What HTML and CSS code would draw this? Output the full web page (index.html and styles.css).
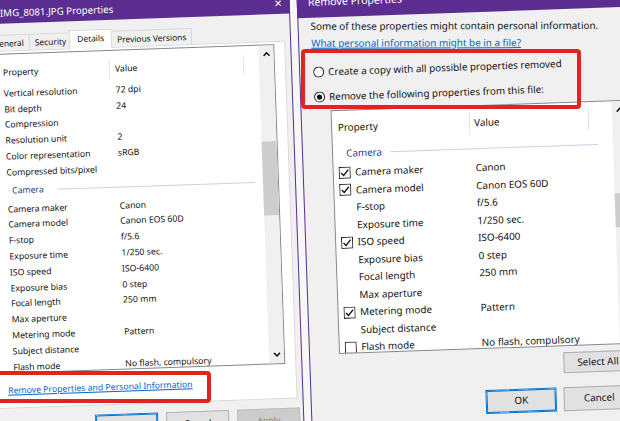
FILE: index.html
```html
<!DOCTYPE html>
<html>
<head>
<meta charset="utf-8">
<title>Remove Properties</title>
<link rel="stylesheet" href="styles.css">
</head>
<body>
<div class="stage">
  <section class="dlg dlg-left">
    <header class="titlebar tb-left">
      <span class="title">IMG_8081.JPG Properties</span>
      <span class="close">✕</span>
    </header>
    <div class="lbody">
      <nav class="tabs">
        <span class="tab">General</span>
        <span class="tab">Security</span>
        <span class="tab active">Details</span>
        <span class="tab">Previous Versions</span>
      </nav>
      <div class="tabpage">
        <div class="list">
          <div class="list-main">
            <div class="lhead">
              <span class="hcol c1">Property</span>
              <span class="hcol c2">Value</span>
              <span class="hcol c3"></span>
            </div>
            <div class="rows">
              <div class="row"><span class="k">Vertical resolution</span><span class="v">72 dpi</span></div>
              <div class="row"><span class="k">Bit depth</span><span class="v">24</span></div>
              <div class="row"><span class="k">Compression</span><span class="v"></span></div>
              <div class="row"><span class="k">Resolution unit</span><span class="v">2</span></div>
              <div class="row"><span class="k">Color representation</span><span class="v">sRGB</span></div>
              <div class="row"><span class="k">Compressed bits/pixel</span><span class="v"></span></div>
              <div class="group"><span>Camera</span><i></i></div>
              <div class="row"><span class="k">Camera maker</span><span class="v">Canon</span></div>
              <div class="row"><span class="k">Camera model</span><span class="v">Canon EOS 60D</span></div>
              <div class="row"><span class="k">F-stop</span><span class="v">f/5.6</span></div>
              <div class="row"><span class="k">Exposure time</span><span class="v">1/250 sec.</span></div>
              <div class="row"><span class="k">ISO speed</span><span class="v">ISO-6400</span></div>
              <div class="row"><span class="k">Exposure bias</span><span class="v">0 step</span></div>
              <div class="row"><span class="k">Focal length</span><span class="v">250 mm</span></div>
              <div class="row"><span class="k">Max aperture</span><span class="v"></span></div>
              <div class="row"><span class="k">Metering mode</span><span class="v">Pattern</span></div>
              <div class="row"><span class="k">Subject distance</span><span class="v"></span></div>
              <div class="row"><span class="k">Flash mode</span><span class="v">No flash, compulsory</span></div>
            </div>
          </div>
          <div class="vscroll">
            <span class="arrow"><svg width="8" height="5" viewBox="0 0 8 5"><path d="M1 4.5 L4 1.3 L7 4.5" fill="none" stroke="#111" stroke-width="1.5"/></svg></span>
            <span class="track"><span class="thumb thumb-l"></span></span>
            <span class="arrow"><svg width="8" height="5" viewBox="0 0 8 5"><path d="M1 0.5 L4 3.7 L7 0.5" fill="none" stroke="#111" stroke-width="1.5"/></svg></span>
          </div>
        </div>
        <div class="link-row"><a class="link">Remove Properties and Personal Information</a></div>
      </div>
      <div class="lbuttons">
        <span class="btn default">OK</span>
        <span class="btn">Cancel</span>
        <span class="btn disabled">Apply</span>
      </div>
    </div>
  </section>

  <section class="dlg dlg-right">
    <header class="titlebar tb-right">
      <span class="title">Remove Properties</span>
    </header>
    <div class="rbody">
      <p class="intro">Some of these properties might contain personal information.</p>
      <a class="rlink">What personal information might be in a file?</a>
      <div class="radios">
        <label class="radio"><svg width="11" height="11" viewBox="0 0 11 11"><circle cx="5.5" cy="5.5" r="5" fill="#fff" stroke="#222"/></svg><span>Create a copy with all possible properties removed</span></label>
        <label class="radio"><svg width="11" height="11" viewBox="0 0 11 11"><circle cx="5.5" cy="5.5" r="5" fill="#fff" stroke="#222"/><circle cx="5.5" cy="5.5" r="2.6" fill="#111"/></svg><span>Remove the following properties from this file:</span></label>
      </div>
      <div class="rlist">
        <div class="rlist-main">
          <div class="rhead">
            <span class="rh c1">Property</span>
            <span class="rh c2">Value</span>
            <span class="rh c3"></span>
          </div>
          <div class="rgroup"><span>Camera</span><i></i></div>
          <div class="rrow"><span class="ck"><svg width="12" height="12" viewBox="0 0 12 12"><rect x="0.5" y="0.5" width="11" height="11" fill="#fff" stroke="#222"/><path d="M2.4 6.2 L4.8 8.7 L9.6 3.1" fill="none" stroke="#111" stroke-width="1.3"/></svg></span><span class="k">Camera maker</span><span class="v">Canon</span></div>
          <div class="rrow"><span class="ck"><svg width="12" height="12" viewBox="0 0 12 12"><rect x="0.5" y="0.5" width="11" height="11" fill="#fff" stroke="#222"/><path d="M2.4 6.2 L4.8 8.7 L9.6 3.1" fill="none" stroke="#111" stroke-width="1.3"/></svg></span><span class="k">Camera model</span><span class="v">Canon EOS 60D</span></div>
          <div class="rrow"><span class="ck"></span><span class="k">F-stop</span><span class="v">f/5.6</span></div>
          <div class="rrow"><span class="ck"></span><span class="k">Exposure time</span><span class="v">1/250 sec.</span></div>
          <div class="rrow"><span class="ck"><svg width="12" height="12" viewBox="0 0 12 12"><rect x="0.5" y="0.5" width="11" height="11" fill="#fff" stroke="#222"/><path d="M2.4 6.2 L4.8 8.7 L9.6 3.1" fill="none" stroke="#111" stroke-width="1.3"/></svg></span><span class="k">ISO speed</span><span class="v">ISO-6400</span></div>
          <div class="rrow"><span class="ck"></span><span class="k">Exposure bias</span><span class="v">0 step</span></div>
          <div class="rrow"><span class="ck"></span><span class="k">Focal length</span><span class="v">250 mm</span></div>
          <div class="rrow"><span class="ck"></span><span class="k">Max aperture</span><span class="v"></span></div>
          <div class="rrow"><span class="ck"><svg width="12" height="12" viewBox="0 0 12 12"><rect x="0.5" y="0.5" width="11" height="11" fill="#fff" stroke="#222"/><path d="M2.4 6.2 L4.8 8.7 L9.6 3.1" fill="none" stroke="#111" stroke-width="1.3"/></svg></span><span class="k">Metering mode</span><span class="v">Pattern</span></div>
          <div class="rrow"><span class="ck"></span><span class="k">Subject distance</span><span class="v"></span></div>
          <div class="rrow"><span class="ck"><svg width="12" height="12" viewBox="0 0 12 12"><rect x="0.5" y="0.5" width="11" height="11" fill="#fff" stroke="#222"/></svg></span><span class="k">Flash mode</span><span class="v">No flash, compulsory</span></div>
        </div>
        <div class="vscroll rscroll">
          <span class="arrow"><svg width="8" height="5" viewBox="0 0 8 5"><path d="M1 4.5 L4 1.3 L7 4.5" fill="none" stroke="#111" stroke-width="1.5"/></svg></span>
          <span class="track"><span class="thumb thumb-r"></span></span>
          <span class="arrow"><svg width="8" height="5" viewBox="0 0 8 5"><path d="M1 0.5 L4 3.7 L7 0.5" fill="none" stroke="#111" stroke-width="1.5"/></svg></span>
        </div>
      </div>
      <div class="selrow"><span class="btn sel">Select All</span></div>
      <div class="rbuttons">
        <span class="btn default rb">OK</span>
        <span class="btn rb">Cancel</span>
      </div>
    </div>
  </section>
</div>
<div class="mark mark-left"></div>
<div class="mark mark-right"></div>
</body>
</html>
```

FILE: styles.css
```css
* { box-sizing: border-box; }

body {
  margin: 0;
  width: 620px;
  height: 421px;
  overflow: hidden;
  position: relative;
  background: #f7f7f7;
  font-family: "Noto Sans", "Open Sans", sans-serif;
  color: #111;
}

.stage {
  display: flex;
  align-items: flex-start;
  width: 720px;
  height: 520px;
  margin: -40px 0 0 -40px;
  padding: 24px 0 0 20px;
  transform: rotate(-2deg);
  transform-origin: 350px 250px;
}

.dlg {
  flex: none;
  height: 470px;
  background: #f0f0f0;
  border: 1px solid #5c2d91;
  border-top: 0;
}

.dlg-left { width: 317px; }
.dlg-right { width: 380px; margin-left: 7px; }

.titlebar {
  display: flex;
  align-items: flex-start;
  justify-content: space-between;
  background: #5c2d91;
  color: #fff;
  margin: 0 -1px;
}

.tb-left {
  height: 29px;
  padding: 12px 8px 0 27px;
  font-size: 9.7px;
  line-height: 13px;
}

.close { font-size: 10px; line-height: 13px; }

.tb-right {
  height: 33.5px;
  padding: 11.5px 0 0 11px;
  font-size: 10.6px;
  line-height: 13px;
}

/* ---------- left dialog ---------- */
.lbody { font-size: 8.7px; }

.tabs {
  display: flex;
  align-items: flex-end;
  height: 18px;
  margin-top: 9px;
  padding-left: 12px;
  font-size: 8.4px;
}

.tab {
  height: 16px;
  padding: 0 5px;
  line-height: 15px;
  border: 1px solid #d9d9d9;
  border-bottom: 0;
  margin-right: -1px;
  background: #f0f0f0;
  white-space: nowrap;
}

.tab.active {
  height: 19px;
  margin: 0 -1px -1px -2px;
  padding: 0 7px;
  line-height: 15px;
  background: #fff;
  position: relative;
  z-index: 1;
}

.tabpage {
  width: 304px;
  height: 358px;
  margin-left: 6px;
  background: #fff;
  border: 1px solid #d9d9d9;
  padding-top: 2px;
}

.list {
  display: flex;
  width: 292px;
  height: 320px;
  border: 1px solid #828790;
  background: #fff;
  overflow: hidden;
}

.list-main { flex: 1; min-width: 0; }

.lhead { display: flex; height: 30px; }

.hcol {
  padding-top: 12px;
  line-height: 12px;
  white-space: nowrap;
}

.hcol.c1 { width: 125px; padding-left: 19px; }
.hcol.c2, .hcol.c3 {
  background: linear-gradient(#e3e3e3, #e3e3e3) no-repeat 0 9px / 1px 20px;
}
.hcol.c2 { width: 134px; padding-left: 6px; }
.hcol.c3 { flex: 1; }

.rows { padding-top: 1px; }

.row {
  display: flex;
  align-items: center;
  height: 15.8px;
  line-height: 12px;
  white-space: nowrap;
}

.row .k { width: 125px; padding-left: 19px; flex: none; }
.row .v { padding-left: 6px; }

.group {
  display: flex;
  align-items: center;
  height: 21px;
  padding-left: 24px;
  color: #1f3b8f;
}

.group i {
  display: block;
  width: 198px;
  height: 1px;
  margin-left: 13px;
  background: #c6d4e8;
}

.vscroll {
  flex: none;
  width: 15px;
  background: #f0f0f0;
  display: flex;
  flex-direction: column;
}

.arrow {
  height: 17px;
  display: flex;
  align-items: center;
  justify-content: center;
  flex: none;
}

.track { flex: 1; display: flex; flex-direction: column; }

.thumb { display: block; background: #cdcdcd; flex: none; }
.thumb-l { margin-top: 79px; height: 74px; }

.link-row { padding: 10.5px 0 0 14px; line-height: 13px; }

.link, .rlink {
  color: #0066cc;
  text-decoration: underline;
  white-space: nowrap;
}

.lbuttons {
  display: flex;
  justify-content: flex-end;
  gap: 8px;
  margin-top: 9px;
  padding-right: 3px;
}

.btn {
  display: flex;
  align-items: center;
  justify-content: center;
  width: 63px;
  height: 23px;
  background: #e1e1e1;
  border: 1px solid #adadad;
  white-space: nowrap;
}

.btn.default {
  border-color: #0078d7;
  box-shadow: inset 0 0 0 1px #0078d7;
}

.btn.disabled {
  background: #cccccc;
  border-color: #bfbfbf;
  color: #838383;
}

/* ---------- right dialog ---------- */
.rbody {
  width: 330px;
  padding-left: 11.5px;
  font-size: 9.9px;
  line-height: 13px;
}

.intro,
.rlink {
  width: max-content;
  transform: rotate(1.8deg);
  transform-origin: 0 50%;
}

.intro { margin: 2px 0 0; white-space: nowrap; }

.rlink { display: block; margin-top: 4px; }

.radios {
  display: flex;
  flex-direction: column;
  gap: 9px;
  margin-top: 14.8px;
}

.radio {
  display: flex;
  align-items: center;
  height: 16px;
  padding-left: 1px;
  white-space: nowrap;
}

.radio span { margin-left: 4.5px; }

.rlist {
  display: flex;
  width: 298px;
  height: 244px;
  margin: 5.7px 0 0 17.5px;
  border: 1px solid #828790;
  background: #fff;
  overflow: hidden;
}

.rlist-main { flex: 1; min-width: 0; }

.rhead { display: flex; height: 33px; }

.rh { padding-top: 10.5px; white-space: nowrap; }
.rh.c1 { width: 136.5px; padding-left: 5.7px; }
.rh.c2, .rh.c3 {
  background: linear-gradient(#e3e3e3, #e3e3e3) no-repeat 0 5.5px / 1px 23.5px;
}
.rh.c2 { width: 119.5px; padding-left: 5.5px; }
.rh.c3 { flex: 1; }

.rgroup {
  display: flex;
  align-items: center;
  height: 20px;
  padding-left: 13px;
  color: #1f3b8f;
}

.rgroup i {
  display: block;
  width: 208px;
  height: 1px;
  margin-left: 7.5px;
  background: #c6d4e8;
}

.rrow {
  display: flex;
  align-items: center;
  height: 17.5px;
  padding-left: 5px;
  white-space: nowrap;
}

.rrow .ck { width: 12px; height: 12px; flex: none; display: flex; }
.rrow .k { width: 119.5px; padding-left: 4.5px; flex: none; }
.rrow .v { padding-left: 5.5px; }

.rscroll { width: 16px; }
.thumb-r { margin-top: 75px; height: 34px; }

.selrow {
  display: flex;
  justify-content: flex-end;
  width: 310.5px;
  margin-top: 6px;
}

.btn.sel { width: 69px; height: 21px; }

.rbuttons {
  display: flex;
  justify-content: flex-end;
  gap: 7px;
  width: 311.5px;
  margin-top: 14px;
}

.btn.rb { width: 71px; height: 24px; }

/* ---------- annotation boxes drawn over the screenshot ---------- */
.mark {
  position: absolute;
  border: 4px solid #e3231c;
  border-radius: 4px;
  pointer-events: none;
}

.mark-left { left: -6px; top: 371px; width: 217px; height: 32px; }
.mark-right { left: 301px; top: 49px; width: 280px; height: 60px; }
```
